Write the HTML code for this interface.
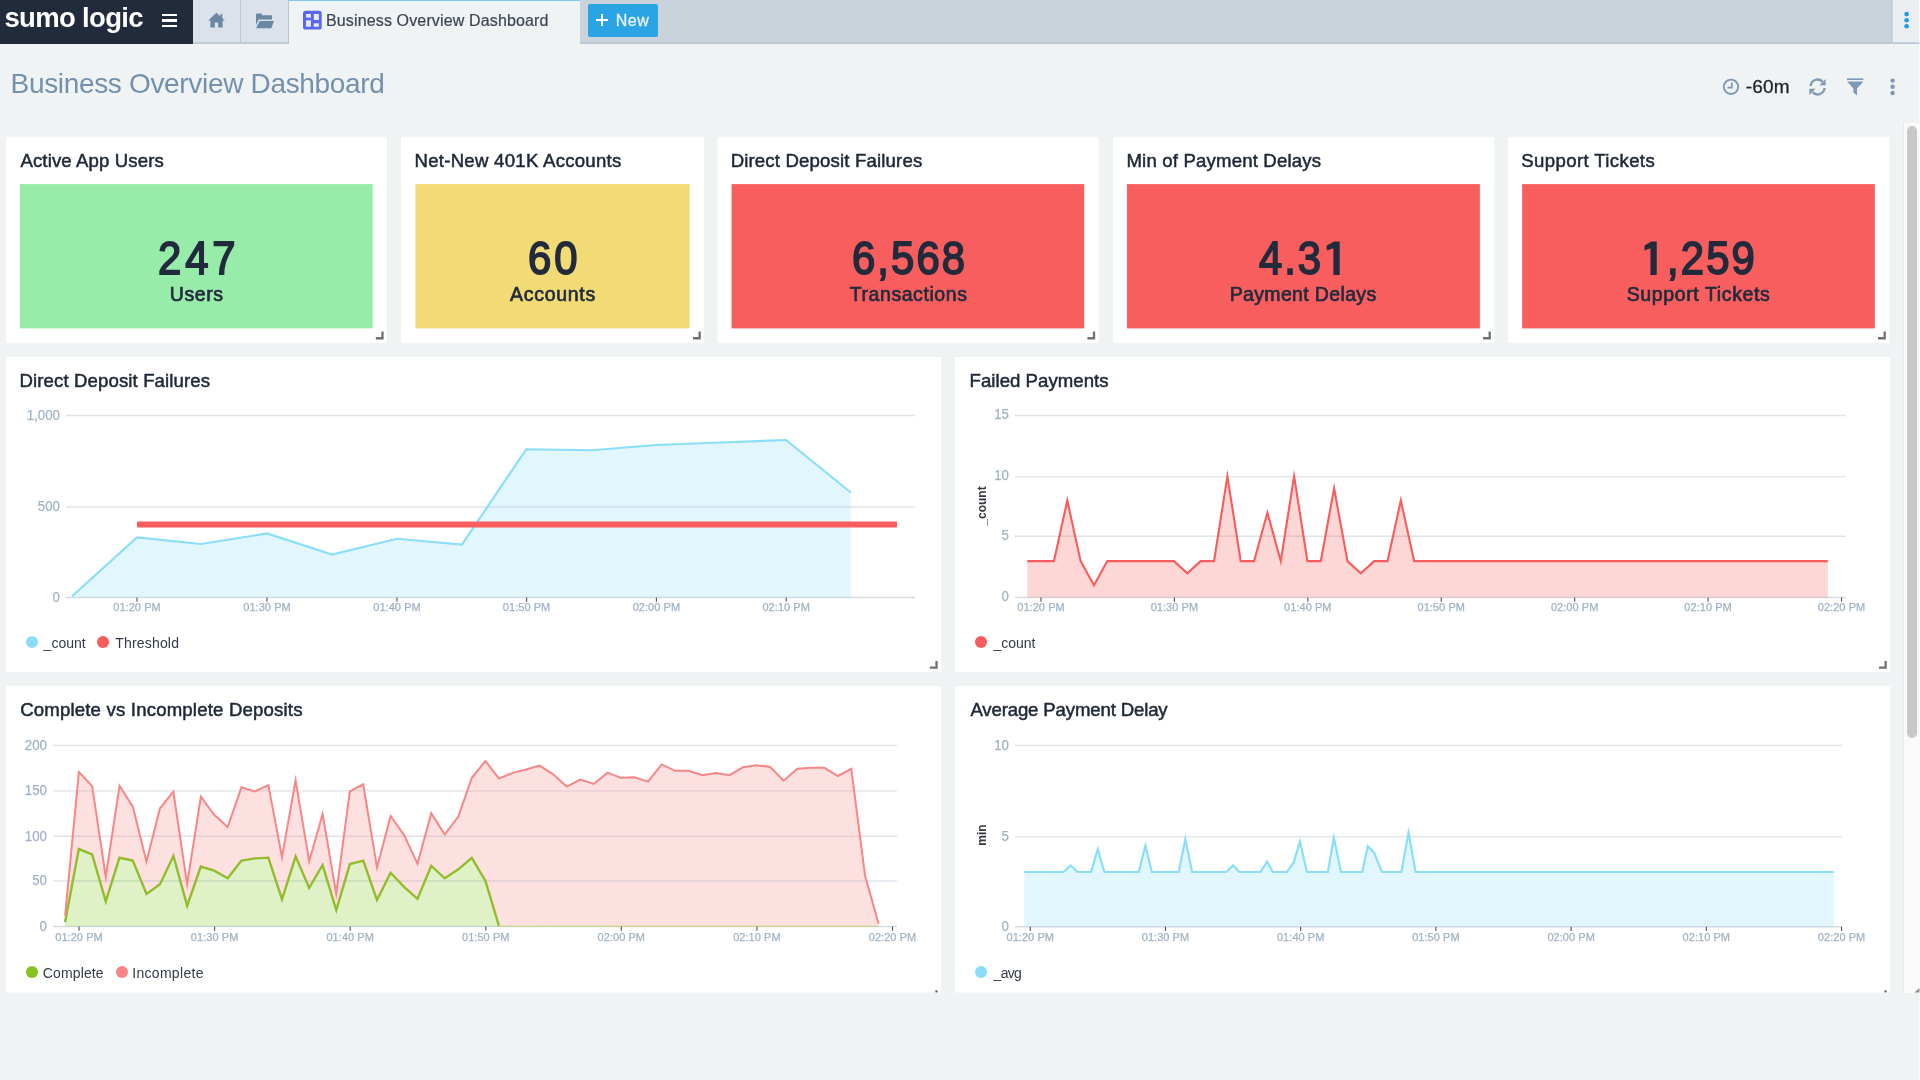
<!DOCTYPE html>
<html><head><meta charset="utf-8"><title>Business Overview Dashboard</title>
<style>
*{box-sizing:border-box;margin:0;padding:0}
html,body{width:1920px;height:1080px;overflow:hidden}
body{background:#f0f3f4;font-family:"Liberation Sans",sans-serif;position:relative;color:#1d2737}
.a{position:absolute}
.t{position:absolute;white-space:nowrap;line-height:1}
.panel{position:absolute;background:#fff}
.pt{position:absolute;white-space:nowrap;line-height:1;color:#1d2737;-webkit-text-stroke:0.5px #1d2737}
.big{position:absolute;white-space:nowrap;line-height:1;color:#222b3c;-webkit-text-stroke:1.8px #222b3c;transform:scaleX(0.89);transform-origin:0 50%}
.lbl{position:absolute;white-space:nowrap;line-height:1;color:#222b3c;-webkit-text-stroke:0.65px #222b3c}
.ax{position:absolute;white-space:nowrap;line-height:1;color:#9fb2c6;-webkit-text-stroke:0.25px #9fb2c6}
.lg{position:absolute;white-space:nowrap;line-height:1;color:#333a46}
.rh{position:absolute;width:7px;height:7px;border-right:2px solid #54585f;border-bottom:2px solid #54585f}
svg{position:absolute;left:0;top:0;overflow:visible}
</style></head>
<body>
<div id="root" style="position:absolute;left:0;top:0;width:1920px;height:1080px;will-change:transform">

<div class="a" style="left:0;top:0;width:1920px;height:44px;background:#c8d3dc"></div>
<div class="a" style="left:0;top:0;width:193px;height:44px;background:#212b3b"></div>
<div class="a" style="left:162px;top:14px;width:15px;height:2.4px;background:#fff"></div>
<div class="a" style="left:162px;top:19.4px;width:15px;height:2.4px;background:#fff"></div>
<div class="a" style="left:162px;top:24.6px;width:15px;height:2.4px;background:#fff"></div>
<div class="a" style="left:193px;top:0;width:48px;height:44px;background:#dbe2e9;border-right:1px solid #b9c6d4"></div>
<div class="a" style="left:241px;top:0;width:48px;height:44px;background:#dbe2e9;border-right:1px solid #b9c6d4"></div>
<div class="a" style="left:289px;top:0;width:291px;height:44px;background:#f0f3f4;border-top:1.5px solid #7cc6f2"></div>
<svg width="1920" height="44" viewBox="0 0 1920 44">
 <g fill="#6a87a5">
  <path d="M216.4 12.8 L224.8 20.6 L222.6 20.6 L222.6 27.4 L218.2 27.4 L218.2 22.6 L214.8 22.6 L214.8 27.4 L210.4 27.4 L210.4 20.6 L208.2 20.6 Z"/>
  <rect x="220.3" y="14.2" width="2" height="4.5"/>
 </g>
 <g fill="#6a87a5">
  <path d="M256 14.4 Q256 13.4 257 13.4 L261 13.4 Q262 13.4 262 14.4 L262 15.2 L271 15.2 Q272 15.2 272 16.2 L272 19.6 L258.6 19.6 L256 25.2 Z"/>
  <path d="M259.6 21 L274 21 L271.2 28.2 L256.2 28.2 Z"/>
 </g>
 <rect x="303" y="10.8" width="18.7" height="18.8" rx="2.6" fill="#5b67f0"/>
 <g fill="#e9ebfd">
  <rect x="306.1" y="14" width="4.8" height="3.6"/>
  <rect x="306.1" y="20.4" width="4.8" height="6.3"/>
  <rect x="313.8" y="14" width="5" height="6"/>
  <rect x="313.8" y="23.3" width="5" height="3.4"/>
 </g>
 <rect x="1892.3" y="0" width="27.7" height="43.5" fill="#ebeff2"/>
 <rect x="1891.3" y="0" width="1.2" height="43.5" fill="#bac6d4"/>
 <rect x="193" y="42.3" width="96" height="1.6" fill="#b9c6d4"/>
 <rect x="580" y="42.3" width="1340" height="1.6" fill="#b9c6d4"/>
 <g fill="#1e9be9"><circle cx="1906.6" cy="14.1" r="2.3"/><circle cx="1906.6" cy="20.2" r="2.3"/><circle cx="1906.6" cy="26.3" r="2.3"/></g>
</svg>
<div class="a" style="left:588px;top:4px;width:70px;height:32.5px;background:#2ba4e4;border-radius:2px"></div>
<div class="a" style="left:596px;top:19.3px;width:12px;height:2px;background:#fff"></div>
<div class="a" style="left:601px;top:14.3px;width:2px;height:12px;background:#fff"></div>

<svg width="1920" height="130" viewBox="0 0 1920 130">
 <g fill="none" stroke="#7e99b6" stroke-width="1.9">
  <circle cx="1731" cy="86.8" r="7.2"/>
  <path d="M1731.8 82.5 L1731.8 87.6 L1727.6 87.6" stroke-width="1.7"/>
 </g>
 <g fill="none" stroke="#7e99b6" stroke-width="2.3">
  <path d="M1810.6 86 A7 7 0 0 1 1822.5 81.6"/>
  <path d="M1824.6 88 A7 7 0 0 1 1812.7 92.4"/>
 </g>
 <g fill="#7e99b6">
  <path d="M1825.6 79 L1825.6 85.2 L1819.4 85.2 Z"/>
  <path d="M1809.4 95 L1809.4 88.8 L1815.6 88.8 Z"/>
 </g>
 <g fill="#7e99b6">
  <rect x="1847" y="78.4" width="16.4" height="1.6"/>
  <path d="M1847 81.4 L1863.4 81.4 L1857 88.4 L1857 95.6 L1853.4 92.6 L1853.4 88.4 Z"/>
 </g>
 <g fill="#7e99b6"><circle cx="1892.6" cy="80.6" r="2.2"/><circle cx="1892.6" cy="86.8" r="2.2"/><circle cx="1892.6" cy="93" r="2.2"/></g>
</svg>

<div class="a" style="left:1903px;top:123px;width:17px;height:869.5px;background:#fafafa;border-left:1px solid #e8e8e8"></div>
<div class="a" style="left:1907.3px;top:126.3px;width:9.6px;height:611.5px;background:#c8c8c8;border-radius:4.8px"></div>
<svg width="1920" height="1080"><polygon points="1920,987.5 1920,992.5 1914.5,992.5" fill="#8c8c8c"/><rect x="1919" y="0" width="1" height="1080" fill="#fff" fill-opacity="0.6"/></svg>
<svg width="1920" height="1080"><rect x="6.0" y="137" width="381.05" height="205.9" fill="#fff"/><rect x="20.00" y="184.1" width="352.65" height="144.3" fill="#98eca9"/><path d="M382.50 331.60 L382.50 338.25 L375.85 338.25" fill="none" stroke="#707070" stroke-width="2.3"/></svg>
<svg width="1920" height="1080"><rect x="400.9" y="137" width="303.30" height="205.9" fill="#fff"/><rect x="415.40" y="184.1" width="274.30" height="144.3" fill="#f2db75"/><path d="M699.65 331.60 L699.65 338.25 L693.00 338.25" fill="none" stroke="#707070" stroke-width="2.3"/></svg>
<svg width="1920" height="1080"><rect x="717.6" y="137" width="381.00" height="205.9" fill="#fff"/><rect x="731.60" y="184.1" width="352.60" height="144.3" fill="#f95e5f"/><path d="M1094.05 331.60 L1094.05 338.25 L1087.40 338.25" fill="none" stroke="#707070" stroke-width="2.3"/></svg>
<svg width="1920" height="1080"><rect x="1112.9" y="137" width="381.35" height="205.9" fill="#fff"/><rect x="1126.90" y="184.1" width="352.95" height="144.3" fill="#f95e5f"/><path d="M1489.70 331.60 L1489.70 338.25 L1483.05 338.25" fill="none" stroke="#707070" stroke-width="2.3"/></svg>
<svg width="1920" height="1080"><polygon points="1339.70,241.60 1339.70,275.00 1333.40,275.00 1333.40,248.20 1326.75,250.60 1326.75,245.50 1334.30,241.60" fill="#222b3c"/></svg>
<svg width="1920" height="1080"><rect x="1508.15" y="137" width="381.10" height="205.9" fill="#fff"/><rect x="1522.15" y="184.1" width="352.70" height="144.3" fill="#f95e5f"/><path d="M1884.70 331.60 L1884.70 338.25 L1878.05 338.25" fill="none" stroke="#707070" stroke-width="2.3"/></svg>
<svg width="1920" height="1080"><polygon points="1656.75,241.60 1656.75,275.00 1650.45,275.00 1650.45,248.20 1644.50,250.60 1644.50,245.50 1651.35,241.60" fill="#222b3c"/></svg>
<svg width="1920" height="1080"><rect x="6.0" y="357.0" width="935.1" height="315.2" fill="#fff"/><path d="M936.55 660.90 L936.55 667.55 L929.90 667.55" fill="none" stroke="#707070" stroke-width="2.3"/></svg>
<svg width="1920" height="1080"><rect x="955.0" y="357.0" width="935.2" height="315.2" fill="#fff"/><path d="M1885.65 660.90 L1885.65 667.55 L1879.00 667.55" fill="none" stroke="#707070" stroke-width="2.3"/></svg>
<svg width="1920" height="1080"><rect x="6.0" y="686.5" width="935.1" height="306" fill="#fff"/></svg>
<svg width="1920" height="1080"><rect x="955.0" y="686.5" width="935.2" height="306" fill="#fff"/></svg>
<svg width="1920" height="1080"><rect x="935.3" y="990.2" width="2.4" height="2.3" rx="0.8" fill="#6a6a6a"/><rect x="1884.3" y="990.2" width="2.4" height="2.3" rx="0.8" fill="#6a6a6a"/></svg>
<div class="ax" style="left:97.00px;width:80px;text-align:center;top:602.29px;font-size:11px;letter-spacing:0.05px">01:20 PM</div>
<div class="ax" style="left:227.00px;width:80px;text-align:center;top:602.29px;font-size:11px;letter-spacing:0.05px">01:30 PM</div>
<div class="ax" style="left:357.00px;width:80px;text-align:center;top:602.29px;font-size:11px;letter-spacing:0.05px">01:40 PM</div>
<div class="ax" style="left:486.60px;width:80px;text-align:center;top:602.29px;font-size:11px;letter-spacing:0.05px">01:50 PM</div>
<div class="ax" style="left:616.40px;width:80px;text-align:center;top:602.29px;font-size:11px;letter-spacing:0.05px">02:00 PM</div>
<div class="ax" style="left:746.20px;width:80px;text-align:center;top:602.29px;font-size:11px;letter-spacing:0.05px">02:10 PM</div>
<div class="ax" style="left:0.30px;width:60px;text-align:right;top:406.80px;font-size:15px;transform:scaleX(0.885);transform-origin:100% 50%">1,000</div>
<div class="ax" style="left:0.30px;width:60px;text-align:right;top:498.30px;font-size:15px;transform:scaleX(0.885);transform-origin:100% 50%">500</div>
<div class="ax" style="left:0.30px;width:60px;text-align:right;top:588.80px;font-size:15px;transform:scaleX(0.885);transform-origin:100% 50%">0</div>
<div class="a" style="left:25.75px;top:636.00px;width:12px;height:12px;border-radius:6px;background:#8adef9"></div>
<div class="a" style="left:97.00px;top:636.00px;width:12px;height:12px;border-radius:6px;background:#f85c5c"></div>
<div class="ax" style="left:1001.00px;width:80px;text-align:center;top:602.29px;font-size:11px;letter-spacing:0.05px">01:20 PM</div>
<div class="ax" style="left:1134.42px;width:80px;text-align:center;top:602.29px;font-size:11px;letter-spacing:0.05px">01:30 PM</div>
<div class="ax" style="left:1267.84px;width:80px;text-align:center;top:602.29px;font-size:11px;letter-spacing:0.05px">01:40 PM</div>
<div class="ax" style="left:1401.26px;width:80px;text-align:center;top:602.29px;font-size:11px;letter-spacing:0.05px">01:50 PM</div>
<div class="ax" style="left:1534.68px;width:80px;text-align:center;top:602.29px;font-size:11px;letter-spacing:0.05px">02:00 PM</div>
<div class="ax" style="left:1668.10px;width:80px;text-align:center;top:602.29px;font-size:11px;letter-spacing:0.05px">02:10 PM</div>
<div class="ax" style="left:1801.52px;width:80px;text-align:center;top:602.29px;font-size:11px;letter-spacing:0.05px">02:20 PM</div>
<div class="ax" style="left:949.40px;width:60px;text-align:right;top:406.10px;font-size:15px;transform:scaleX(0.885);transform-origin:100% 50%">15</div>
<div class="ax" style="left:949.40px;width:60px;text-align:right;top:467.10px;font-size:15px;transform:scaleX(0.885);transform-origin:100% 50%">10</div>
<div class="ax" style="left:949.40px;width:60px;text-align:right;top:526.90px;font-size:15px;transform:scaleX(0.885);transform-origin:100% 50%">5</div>
<div class="ax" style="left:949.40px;width:60px;text-align:right;top:587.90px;font-size:15px;transform:scaleX(0.885);transform-origin:100% 50%">0</div>
<div class="a" style="left:974.75px;top:636.00px;width:12px;height:12px;border-radius:6px;background:#f85c5c"></div>
<div class="t" style="left:962px;top:500px;width:40px;height:12px;text-align:center;font-size:12px;font-weight:bold;color:#33383f;transform:rotate(-90deg);transform-origin:center center">_count</div>
<div class="ax" style="left:39.03px;width:80px;text-align:center;top:932.29px;font-size:11px;letter-spacing:0.05px">01:20 PM</div>
<div class="ax" style="left:174.61px;width:80px;text-align:center;top:932.29px;font-size:11px;letter-spacing:0.05px">01:30 PM</div>
<div class="ax" style="left:310.19px;width:80px;text-align:center;top:932.29px;font-size:11px;letter-spacing:0.05px">01:40 PM</div>
<div class="ax" style="left:445.77px;width:80px;text-align:center;top:932.29px;font-size:11px;letter-spacing:0.05px">01:50 PM</div>
<div class="ax" style="left:581.35px;width:80px;text-align:center;top:932.29px;font-size:11px;letter-spacing:0.05px">02:00 PM</div>
<div class="ax" style="left:716.93px;width:80px;text-align:center;top:932.29px;font-size:11px;letter-spacing:0.05px">02:10 PM</div>
<div class="ax" style="left:852.51px;width:80px;text-align:center;top:932.29px;font-size:11px;letter-spacing:0.05px">02:20 PM</div>
<div class="ax" style="left:-13.00px;width:60px;text-align:right;top:736.80px;font-size:15px;transform:scaleX(0.885);transform-origin:100% 50%">200</div>
<div class="ax" style="left:-13.00px;width:60px;text-align:right;top:782.20px;font-size:15px;transform:scaleX(0.885);transform-origin:100% 50%">150</div>
<div class="ax" style="left:-13.00px;width:60px;text-align:right;top:827.60px;font-size:15px;transform:scaleX(0.885);transform-origin:100% 50%">100</div>
<div class="ax" style="left:-13.00px;width:60px;text-align:right;top:872.30px;font-size:15px;transform:scaleX(0.885);transform-origin:100% 50%">50</div>
<div class="ax" style="left:-13.00px;width:60px;text-align:right;top:917.80px;font-size:15px;transform:scaleX(0.885);transform-origin:100% 50%">0</div>
<div class="a" style="left:25.75px;top:966.00px;width:12px;height:12px;border-radius:6px;background:#84c41f"></div>
<div class="a" style="left:115.75px;top:966.00px;width:12px;height:12px;border-radius:6px;background:#f98686"></div>
<div class="ax" style="left:990.25px;width:80px;text-align:center;top:932.29px;font-size:11px;letter-spacing:0.05px">01:20 PM</div>
<div class="ax" style="left:1125.47px;width:80px;text-align:center;top:932.29px;font-size:11px;letter-spacing:0.05px">01:30 PM</div>
<div class="ax" style="left:1260.69px;width:80px;text-align:center;top:932.29px;font-size:11px;letter-spacing:0.05px">01:40 PM</div>
<div class="ax" style="left:1395.91px;width:80px;text-align:center;top:932.29px;font-size:11px;letter-spacing:0.05px">01:50 PM</div>
<div class="ax" style="left:1531.13px;width:80px;text-align:center;top:932.29px;font-size:11px;letter-spacing:0.05px">02:00 PM</div>
<div class="ax" style="left:1666.35px;width:80px;text-align:center;top:932.29px;font-size:11px;letter-spacing:0.05px">02:10 PM</div>
<div class="ax" style="left:1801.57px;width:80px;text-align:center;top:932.29px;font-size:11px;letter-spacing:0.05px">02:20 PM</div>
<div class="ax" style="left:949.40px;width:60px;text-align:right;top:736.80px;font-size:15px;transform:scaleX(0.885);transform-origin:100% 50%">10</div>
<div class="ax" style="left:949.40px;width:60px;text-align:right;top:827.90px;font-size:15px;transform:scaleX(0.885);transform-origin:100% 50%">5</div>
<div class="ax" style="left:949.40px;width:60px;text-align:right;top:918.00px;font-size:15px;transform:scaleX(0.885);transform-origin:100% 50%">0</div>
<div class="a" style="left:974.75px;top:966.00px;width:12px;height:12px;border-radius:6px;background:#8adef9"></div>
<div class="t" style="left:962px;top:829px;width:40px;height:12px;text-align:center;font-size:12px;font-weight:bold;color:#33383f;transform:rotate(-90deg);transform-origin:center center">min</div>
<svg width="1920" height="1080" viewBox="0 0 1920 1080">
<line x1="66" y1="415.5" x2="915" y2="415.5" stroke="#dde4ea" stroke-width="1.4"/>
<line x1="66" y1="507" x2="915" y2="507" stroke="#dde4ea" stroke-width="1.4"/>
<line x1="66" y1="597.5" x2="915" y2="597.5" stroke="#d3dbe3" stroke-width="1.4"/>
<polygon points="72.00,596.30 137.00,537.50 201.00,544.00 267.00,533.50 332.00,554.50 397.00,538.75 462.00,544.50 526.25,449.25 591.75,450.25 656.25,445.00 721.00,442.50 786.00,440.00 850.75,492.50 850.75,597.50 72.00,597.50" fill="#8adef9" fill-opacity="0.25" stroke="none"/>
<polyline points="72.00,596.30 137.00,537.50 201.00,544.00 267.00,533.50 332.00,554.50 397.00,538.75 462.00,544.50 526.25,449.25 591.75,450.25 656.25,445.00 721.00,442.50 786.00,440.00 850.75,492.50" fill="none" stroke="#8adef9" stroke-width="2.2" stroke-linejoin="miter" stroke-miterlimit="30" stroke-linecap="butt"/>
<line x1="137" y1="524.5" x2="897" y2="524.5" stroke="#f85c5c" stroke-width="6"/>
<line x1="137" y1="597.5" x2="137" y2="601.7" stroke="#4d5157" stroke-width="1.1"/>
<line x1="267" y1="597.5" x2="267" y2="601.7" stroke="#4d5157" stroke-width="1.1"/>
<line x1="397" y1="597.5" x2="397" y2="601.7" stroke="#4d5157" stroke-width="1.1"/>
<line x1="526.6" y1="597.5" x2="526.6" y2="601.7" stroke="#4d5157" stroke-width="1.1"/>
<line x1="656.4" y1="597.5" x2="656.4" y2="601.7" stroke="#4d5157" stroke-width="1.1"/>
<line x1="786.2" y1="597.5" x2="786.2" y2="601.7" stroke="#4d5157" stroke-width="1.1"/>
<line x1="1015" y1="415.5" x2="1845.75" y2="415.5" stroke="#dde4ea" stroke-width="1.4"/>
<line x1="1015" y1="476.6" x2="1845.75" y2="476.6" stroke="#dde4ea" stroke-width="1.4"/>
<line x1="1015" y1="536.3" x2="1845.75" y2="536.3" stroke="#dde4ea" stroke-width="1.4"/>
<line x1="1015" y1="597.5" x2="1845.75" y2="597.5" stroke="#d3dbe3" stroke-width="1.4"/>
<polygon points="1027.26,561.11 1040.60,561.11 1053.94,561.11 1067.28,500.46 1080.63,561.11 1093.97,585.37 1107.31,561.11 1120.65,561.11 1133.99,561.11 1147.34,561.11 1160.68,561.11 1174.02,561.11 1187.36,573.24 1200.70,561.11 1214.05,561.11 1227.39,476.20 1240.73,561.11 1254.07,561.11 1267.41,512.59 1280.76,561.11 1294.10,476.20 1307.44,561.11 1320.78,561.11 1334.12,488.33 1347.47,561.11 1360.81,573.24 1374.15,561.11 1387.49,561.11 1400.83,500.46 1414.18,561.11 1427.52,561.11 1440.86,561.11 1454.20,561.11 1467.54,561.11 1480.89,561.11 1494.23,561.11 1507.57,561.11 1520.91,561.11 1534.25,561.11 1547.60,561.11 1560.94,561.11 1574.28,561.11 1587.62,561.11 1600.96,561.11 1614.31,561.11 1627.65,561.11 1640.99,561.11 1654.33,561.11 1667.67,561.11 1681.02,561.11 1694.36,561.11 1707.70,561.11 1721.04,561.11 1734.38,561.11 1747.73,561.11 1761.07,561.11 1774.41,561.11 1787.75,561.11 1801.09,561.11 1814.44,561.11 1827.78,561.11 1827.78,597.50 1027.26,597.50" fill="#f85c5c" fill-opacity="0.25" stroke="none"/>
<polyline points="1027.26,561.11 1040.60,561.11 1053.94,561.11 1067.28,500.46 1080.63,561.11 1093.97,585.37 1107.31,561.11 1120.65,561.11 1133.99,561.11 1147.34,561.11 1160.68,561.11 1174.02,561.11 1187.36,573.24 1200.70,561.11 1214.05,561.11 1227.39,476.20 1240.73,561.11 1254.07,561.11 1267.41,512.59 1280.76,561.11 1294.10,476.20 1307.44,561.11 1320.78,561.11 1334.12,488.33 1347.47,561.11 1360.81,573.24 1374.15,561.11 1387.49,561.11 1400.83,500.46 1414.18,561.11 1427.52,561.11 1440.86,561.11 1454.20,561.11 1467.54,561.11 1480.89,561.11 1494.23,561.11 1507.57,561.11 1520.91,561.11 1534.25,561.11 1547.60,561.11 1560.94,561.11 1574.28,561.11 1587.62,561.11 1600.96,561.11 1614.31,561.11 1627.65,561.11 1640.99,561.11 1654.33,561.11 1667.67,561.11 1681.02,561.11 1694.36,561.11 1707.70,561.11 1721.04,561.11 1734.38,561.11 1747.73,561.11 1761.07,561.11 1774.41,561.11 1787.75,561.11 1801.09,561.11 1814.44,561.11 1827.78,561.11" fill="none" stroke="#f85c5c" stroke-width="2.1" stroke-linejoin="miter" stroke-miterlimit="30" stroke-linecap="butt"/>
<line x1="1041.0" y1="597.5" x2="1041.0" y2="601.7" stroke="#4d5157" stroke-width="1.1"/>
<line x1="1174.42" y1="597.5" x2="1174.42" y2="601.7" stroke="#4d5157" stroke-width="1.1"/>
<line x1="1307.84" y1="597.5" x2="1307.84" y2="601.7" stroke="#4d5157" stroke-width="1.1"/>
<line x1="1441.26" y1="597.5" x2="1441.26" y2="601.7" stroke="#4d5157" stroke-width="1.1"/>
<line x1="1574.6799999999998" y1="597.5" x2="1574.6799999999998" y2="601.7" stroke="#4d5157" stroke-width="1.1"/>
<line x1="1708.1" y1="597.5" x2="1708.1" y2="601.7" stroke="#4d5157" stroke-width="1.1"/>
<line x1="1841.52" y1="597.5" x2="1841.52" y2="601.7" stroke="#4d5157" stroke-width="1.1"/>
<line x1="53" y1="745.5" x2="897" y2="745.5" stroke="#dde4ea" stroke-width="1.4"/>
<line x1="53" y1="790.9" x2="897" y2="790.9" stroke="#dde4ea" stroke-width="1.4"/>
<line x1="53" y1="836.3" x2="897" y2="836.3" stroke="#dde4ea" stroke-width="1.4"/>
<line x1="53" y1="881.0" x2="897" y2="881.0" stroke="#dde4ea" stroke-width="1.4"/>
<line x1="53" y1="926.5" x2="897" y2="926.5" stroke="#d3dbe3" stroke-width="1.4"/>
<clipPath id="cp3"><rect x="50" y="740" width="860" height="187.3"/></clipPath><g clip-path="url(#cp3)">
<polygon points="65.09,922.09 78.81,849.03 92.16,854.40 105.78,901.25 119.43,857.71 132.83,860.57 146.54,893.94 159.98,884.25 173.45,855.85 187.16,905.68 200.78,866.53 214.23,870.72 227.75,878.27 241.37,860.55 254.90,858.40 268.37,857.65 282.01,899.24 295.63,856.40 309.18,887.90 322.59,864.96 336.25,910.01 349.87,864.10 363.27,860.70 376.98,900.01 390.55,872.75 404.04,886.90 417.50,898.79 431.25,865.72 444.73,878.29 458.27,869.31 471.78,857.85 485.39,880.75 498.95,925.78 498.95,926.50 65.09,926.50" fill="#84c41f" fill-opacity="0.25" stroke="none"/>
<polyline points="65.09,922.09 78.81,849.03 92.16,854.40 105.78,901.25 119.43,857.71 132.83,860.57 146.54,893.94 159.98,884.25 173.45,855.85 187.16,905.68 200.78,866.53 214.23,870.72 227.75,878.27 241.37,860.55 254.90,858.40 268.37,857.65 282.01,899.24 295.63,856.40 309.18,887.90 322.59,864.96 336.25,910.01 349.87,864.10 363.27,860.70 376.98,900.01 390.55,872.75 404.04,886.90 417.50,898.79 431.25,865.72 444.73,878.29 458.27,869.31 471.78,857.85 485.39,880.75 498.95,925.78" fill="none" stroke="#84c41f" stroke-width="2.4" stroke-linejoin="miter" stroke-miterlimit="30" stroke-linecap="butt"/>
<polygon points="65.09,915.93 78.88,771.99 92.19,786.10 105.76,876.96 119.52,785.78 132.88,806.86 146.44,861.60 160.01,808.27 173.36,791.74 187.12,884.03 200.86,796.73 214.23,814.77 227.69,827.04 241.43,787.32 254.90,791.34 268.32,785.14 282.00,857.29 295.57,780.35 309.23,861.31 322.60,813.97 336.21,893.69 349.86,791.41 363.21,784.30 377.01,867.39 390.61,815.98 404.04,835.00 417.52,863.61 431.27,813.24 444.73,834.61 458.27,816.53 471.84,777.83 485.39,761.07 498.98,778.58 512.51,772.90 526.06,769.56 539.61,765.56 553.18,774.31 566.75,786.52 580.30,779.63 593.84,783.91 607.43,772.63 620.97,777.81 634.53,777.31 648.05,781.59 661.68,764.41 675.20,770.78 688.76,770.79 702.32,775.17 715.88,773.08 729.43,775.16 742.99,767.28 756.55,765.16 770.10,766.94 783.67,780.63 797.24,768.70 810.78,767.80 824.33,767.82 837.90,775.99 851.28,768.84 865.02,875.47 878.57,923.85 878.57,926.50 498.95,925.78 485.39,880.75 471.78,857.85 458.27,869.31 444.73,878.29 431.25,865.72 417.50,898.79 404.04,886.90 390.55,872.75 376.98,900.01 363.27,860.70 349.87,864.10 336.25,910.01 322.59,864.96 309.18,887.90 295.63,856.40 282.01,899.24 268.37,857.65 254.90,858.40 241.37,860.55 227.75,878.27 214.23,870.72 200.78,866.53 187.16,905.68 173.45,855.85 159.98,884.25 146.54,893.94 132.83,860.57 119.43,857.71 105.78,901.25 92.16,854.40 78.81,849.03 65.09,922.09" fill="#f98686" fill-opacity="0.25" stroke="none"/>
<polyline points="65.09,915.93 78.88,771.99 92.19,786.10 105.76,876.96 119.52,785.78 132.88,806.86 146.44,861.60 160.01,808.27 173.36,791.74 187.12,884.03 200.86,796.73 214.23,814.77 227.69,827.04 241.43,787.32 254.90,791.34 268.32,785.14 282.00,857.29 295.57,780.35 309.23,861.31 322.60,813.97 336.21,893.69 349.86,791.41 363.21,784.30 377.01,867.39 390.61,815.98 404.04,835.00 417.52,863.61 431.27,813.24 444.73,834.61 458.27,816.53 471.84,777.83 485.39,761.07 498.98,778.58 512.51,772.90 526.06,769.56 539.61,765.56 553.18,774.31 566.75,786.52 580.30,779.63 593.84,783.91 607.43,772.63 620.97,777.81 634.53,777.31 648.05,781.59 661.68,764.41 675.20,770.78 688.76,770.79 702.32,775.17 715.88,773.08 729.43,775.16 742.99,767.28 756.55,765.16 770.10,766.94 783.67,780.63 797.24,768.70 810.78,767.80 824.33,767.82 837.90,775.99 851.28,768.84 865.02,875.47 878.57,923.85" fill="none" stroke="#f98686" stroke-width="2" stroke-linejoin="miter" stroke-miterlimit="30" stroke-linecap="butt"/>
<polyline points="498.95,926.30 878.57,926.30" fill="none" stroke="#cfd58f" stroke-width="1.3"/>
</g>
<line x1="79.03" y1="926.5" x2="79.03" y2="930.7" stroke="#4d5157" stroke-width="1.1"/>
<line x1="214.61" y1="926.5" x2="214.61" y2="930.7" stroke="#4d5157" stroke-width="1.1"/>
<line x1="350.19000000000005" y1="926.5" x2="350.19000000000005" y2="930.7" stroke="#4d5157" stroke-width="1.1"/>
<line x1="485.77" y1="926.5" x2="485.77" y2="930.7" stroke="#4d5157" stroke-width="1.1"/>
<line x1="621.35" y1="926.5" x2="621.35" y2="930.7" stroke="#4d5157" stroke-width="1.1"/>
<line x1="756.9300000000001" y1="926.5" x2="756.9300000000001" y2="930.7" stroke="#4d5157" stroke-width="1.1"/>
<line x1="892.51" y1="926.5" x2="892.51" y2="930.7" stroke="#4d5157" stroke-width="1.1"/>
<line x1="1015" y1="745.5" x2="1842" y2="745.5" stroke="#dde4ea" stroke-width="1.4"/>
<line x1="1015" y1="836.6" x2="1842" y2="836.6" stroke="#dde4ea" stroke-width="1.4"/>
<line x1="1015" y1="926.7" x2="1842" y2="926.7" stroke="#d3dbe3" stroke-width="1.4"/>
<polygon points="1024.20,872.00 1063.50,872.00 1070.60,865.41 1077.50,872.00 1091.00,872.00 1097.74,849.07 1104.40,872.00 1138.75,872.00 1145.39,845.69 1151.90,872.00 1178.75,872.00 1185.27,839.38 1192.10,872.00 1226.25,872.00 1233.09,865.23 1239.40,872.00 1260.25,872.00 1267.20,861.63 1272.75,872.00 1286.90,872.00 1293.73,862.49 1299.92,841.37 1306.90,872.00 1327.90,872.00 1333.83,837.84 1341.00,872.00 1362.25,872.00 1367.82,846.00 1374.39,853.11 1381.90,872.00 1401.50,872.00 1408.51,832.64 1415.60,872.00 1833.75,872.00 1833.75,926.70 1024.20,926.70" fill="#8adef9" fill-opacity="0.25" stroke="none"/>
<polyline points="1024.20,872.00 1063.50,872.00 1070.60,865.41 1077.50,872.00 1091.00,872.00 1097.74,849.07 1104.40,872.00 1138.75,872.00 1145.39,845.69 1151.90,872.00 1178.75,872.00 1185.27,839.38 1192.10,872.00 1226.25,872.00 1233.09,865.23 1239.40,872.00 1260.25,872.00 1267.20,861.63 1272.75,872.00 1286.90,872.00 1293.73,862.49 1299.92,841.37 1306.90,872.00 1327.90,872.00 1333.83,837.84 1341.00,872.00 1362.25,872.00 1367.82,846.00 1374.39,853.11 1381.90,872.00 1401.50,872.00 1408.51,832.64 1415.60,872.00 1833.75,872.00" fill="none" stroke="#8adef9" stroke-width="2.2" stroke-linejoin="miter" stroke-miterlimit="30" stroke-linecap="butt"/>
<line x1="1030.25" y1="926.7" x2="1030.25" y2="930.9000000000001" stroke="#4d5157" stroke-width="1.1"/>
<line x1="1165.47" y1="926.7" x2="1165.47" y2="930.9000000000001" stroke="#4d5157" stroke-width="1.1"/>
<line x1="1300.69" y1="926.7" x2="1300.69" y2="930.9000000000001" stroke="#4d5157" stroke-width="1.1"/>
<line x1="1435.91" y1="926.7" x2="1435.91" y2="930.9000000000001" stroke="#4d5157" stroke-width="1.1"/>
<line x1="1571.13" y1="926.7" x2="1571.13" y2="930.9000000000001" stroke="#4d5157" stroke-width="1.1"/>
<line x1="1706.35" y1="926.7" x2="1706.35" y2="930.9000000000001" stroke="#4d5157" stroke-width="1.1"/>
<line x1="1841.5700000000002" y1="926.7" x2="1841.5700000000002" y2="930.9000000000001" stroke="#4d5157" stroke-width="1.1"/>
</svg>
<div class="t" id="logo" style="left:4.42px;top:4.22px;font-size:27.5px;letter-spacing:-0.664px;font-weight:bold;color:#fff">sumo logic</div>
<div class="t" id="tabtitle" style="left:325.96px;top:13.06px;font-size:16px;letter-spacing:0.143px;color:#3c4452;-webkit-text-stroke:0.2px #3c4452">Business Overview Dashboard</div>
<div class="t" id="newtxt" style="left:615.80px;top:12.96px;font-size:16px;letter-spacing:0.490px;color:#eaf5fc;-webkit-text-stroke:0.3px #eaf5fc">New</div>
<div class="t" id="pagetitle" style="left:10.55px;top:69.90px;font-size:28px;letter-spacing:-0.328px;color:#7391ad">Business Overview Dashboard</div>
<div class="t" id="t60m" style="left:1745.68px;top:77.22px;font-size:19px;letter-spacing:0.176px;color:#1f2023;-webkit-text-stroke:0.3px #1f2023">-60m</div>
<div class="pt" id="p1t0" style="left:20.43px;top:151.71px;font-size:18.6px;letter-spacing:0.122px;">Active App Users</div>
<div class="big" id="p1n0" style="left:158.12px;top:233.66px;font-size:47px;letter-spacing:4.392px;">247</div>
<div class="lbl" id="p1l0" style="left:169.72px;top:284.89px;font-size:19.5px;letter-spacing:0.614px;">Users</div>
<div class="pt" id="p1t1" style="left:414.47px;top:151.71px;font-size:18.6px;letter-spacing:0.265px;">Net-New 401K Accounts</div>
<div class="big" id="p1n1" style="left:527.90px;top:233.66px;font-size:47px;letter-spacing:3.416px;">60</div>
<div class="lbl" id="p1l1" style="left:510.10px;top:284.89px;font-size:19.5px;letter-spacing:0.690px;">Accounts</div>
<div class="pt" id="p1t2" style="left:730.65px;top:151.71px;font-size:18.6px;letter-spacing:0.159px;">Direct Deposit Failures</div>
<div class="big" id="p1n2" style="left:852.17px;top:233.66px;font-size:47px;letter-spacing:2.361px;">6,568</div>
<div class="lbl" id="p1l2" style="left:849.78px;top:284.89px;font-size:19.5px;letter-spacing:0.564px;">Transactions</div>
<div class="pt" id="p1t3" style="left:1126.47px;top:151.71px;font-size:18.6px;letter-spacing:0.167px;">Min of Payment Delays</div>
<div class="big" id="p1n3" style="left:1258.75px;top:233.66px;font-size:47px;letter-spacing:2.199px;">4.3</div>
<div class="lbl" id="p1l3" style="left:1229.71px;top:284.89px;font-size:19.5px;letter-spacing:0.345px;">Payment Delays</div>
<div class="pt" id="p1t4" style="left:1521.29px;top:151.71px;font-size:18.6px;letter-spacing:0.376px;">Support Tickets</div>
<div class="big" id="p1n4" style="left:1666.77px;top:233.66px;font-size:47px;letter-spacing:2.415px;">,259</div>
<div class="lbl" id="p1l4" style="left:1626.66px;top:284.89px;font-size:19.5px;letter-spacing:0.625px;">Support Tickets</div>
<div class="pt" id="c1t" style="left:19.54px;top:371.71px;font-size:18.6px;letter-spacing:0.112px;">Direct Deposit Failures</div>
<div class="pt" id="c2t" style="left:969.54px;top:371.71px;font-size:18.6px;letter-spacing:0.037px;">Failed Payments</div>
<div class="pt" id="c3t" style="left:20.14px;top:701.21px;font-size:18.6px;letter-spacing:0.180px;">Complete vs Incomplete Deposits</div>
<div class="pt" id="c4t" style="left:970.43px;top:701.21px;font-size:18.6px;letter-spacing:-0.148px;">Average Payment Delay</div>
<div class="lg" id="c1l0" style="left:43.58px;top:635.75px;font-size:14px;letter-spacing:0.013px;">_count</div>
<div class="lg" id="c1l1" style="left:115.23px;top:635.75px;font-size:14px;letter-spacing:0.183px;">Threshold</div>
<div class="lg" id="c2l0" style="left:993.58px;top:635.75px;font-size:14px;letter-spacing:-0.064px;">_count</div>
<div class="lg" id="c3l0" style="left:42.87px;top:965.75px;font-size:14px;letter-spacing:0.116px;">Complete</div>
<div class="lg" id="c3l1" style="left:132.20px;top:965.75px;font-size:14px;letter-spacing:0.312px;">Incomplete</div>
<div class="lg" id="c4l0" style="left:993.58px;top:965.75px;font-size:14px;letter-spacing:-0.714px;">_avg</div>
</div>
</body></html>
